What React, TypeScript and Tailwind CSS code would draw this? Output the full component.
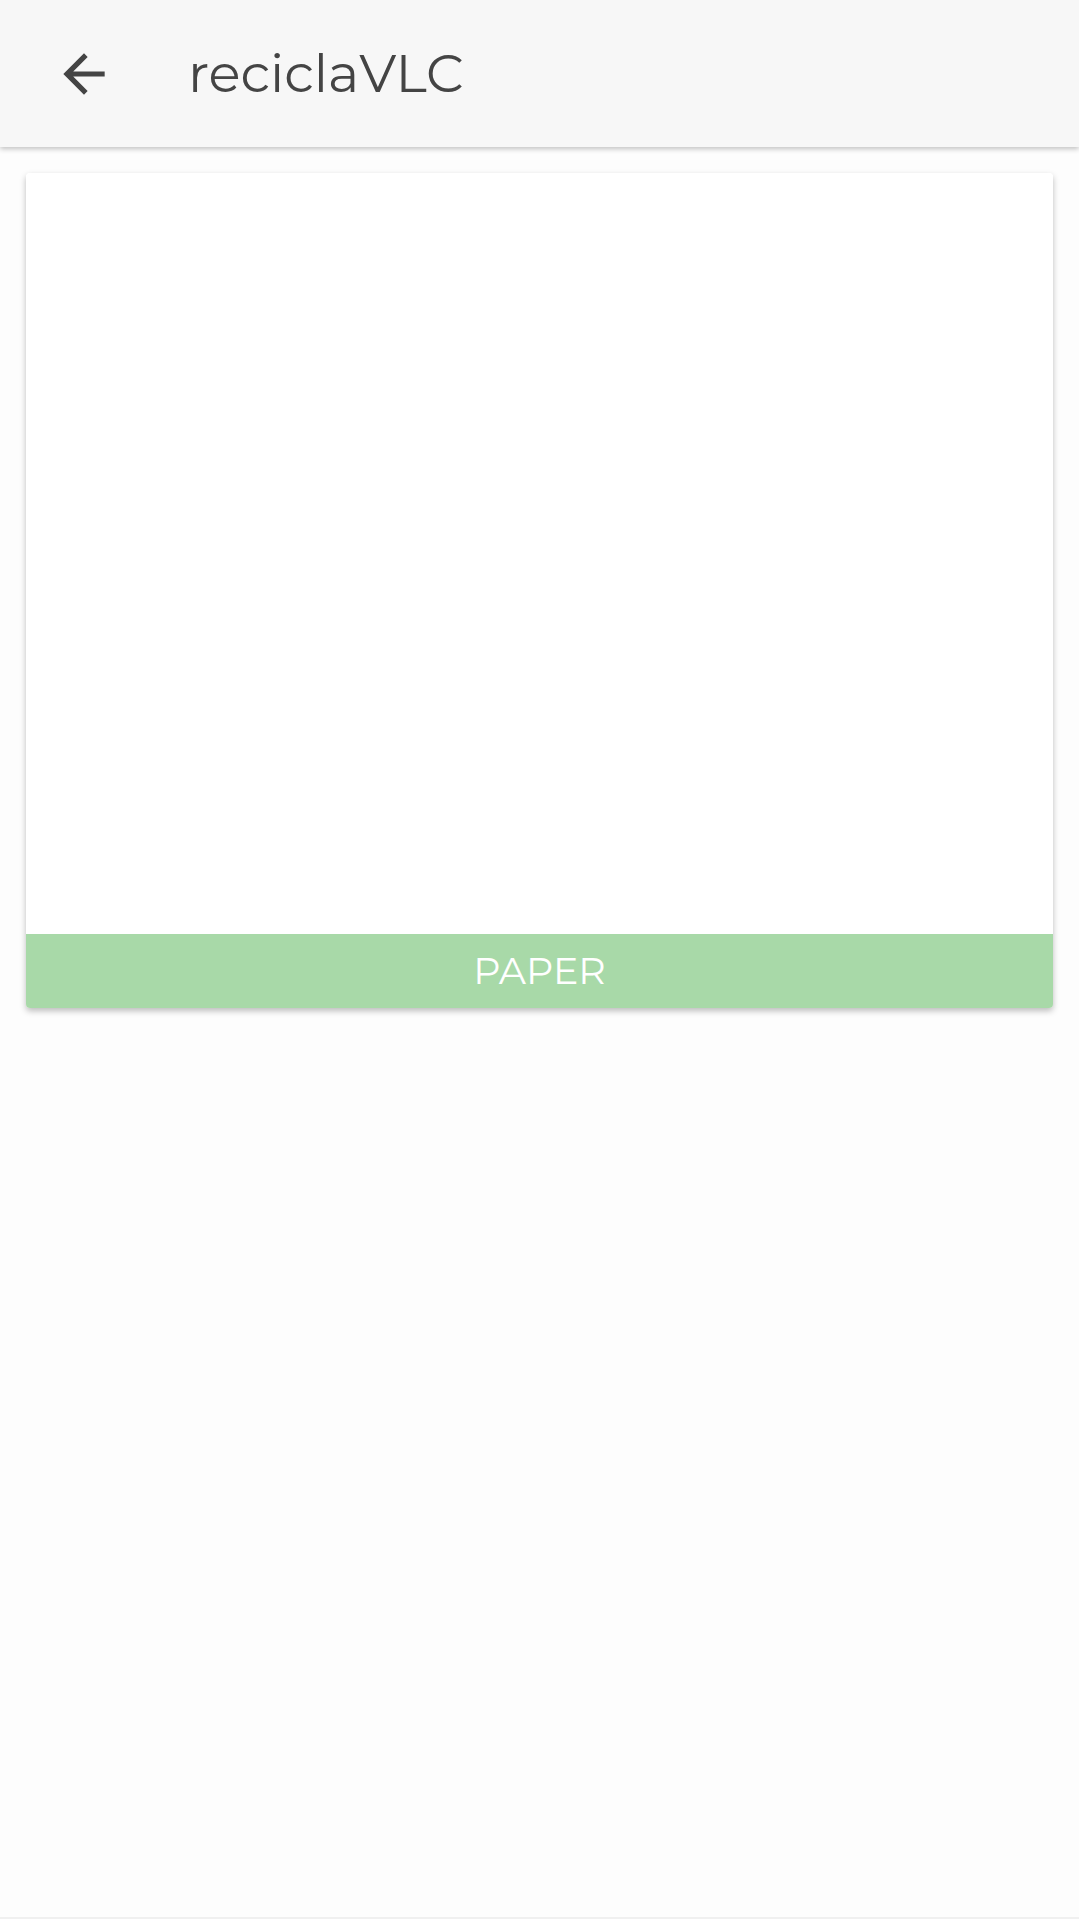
import React from 'react';

const ArrowBack: React.FC = () => (
  <svg viewBox="0 0 24 24" className="h-[62px] w-[62px]" fill="#444444">
    <path d="M20 11H7.83l5.59-5.59L12 4l-8 8 8 8 1.41-1.41L7.83 13H20v-2z" />
  </svg>
);

const App: React.FC = () => {
  return (
    <div
      className="flex min-h-[1919px] flex-col bg-[#fdfdfd]"
      style={{ fontFamily: 'Montserrat, "Open Sans", Lato, sans-serif' }}
    >
      <header className="z-10 flex h-[147px] items-center bg-[#f7f7f7] shadow-[0_2px_5px_rgba(0,0,0,0.24)]">
        <div className="ml-[53px] flex items-center">
          <ArrowBack />
        </div>
        <h1 className="ml-[73px] text-[53px] font-normal leading-none text-[#444444]">reciclaVLC</h1>
      </header>

      <main className="flex-1 px-[26px] pt-[26px]">
        <div className="overflow-hidden rounded-[4px] bg-white shadow-[0_3px_6px_rgba(0,0,0,0.26)]">
          <div className="h-[761px] bg-white" />
          <div className="flex h-[74px] items-center justify-center bg-[#a8d9a8]">
            <span className="text-[38px] leading-none text-white">PAPER</span>
          </div>
        </div>
      </main>

      <div className="h-[2px] bg-[#f0f0f0]" />
    </div>
  );
};

export default App;
